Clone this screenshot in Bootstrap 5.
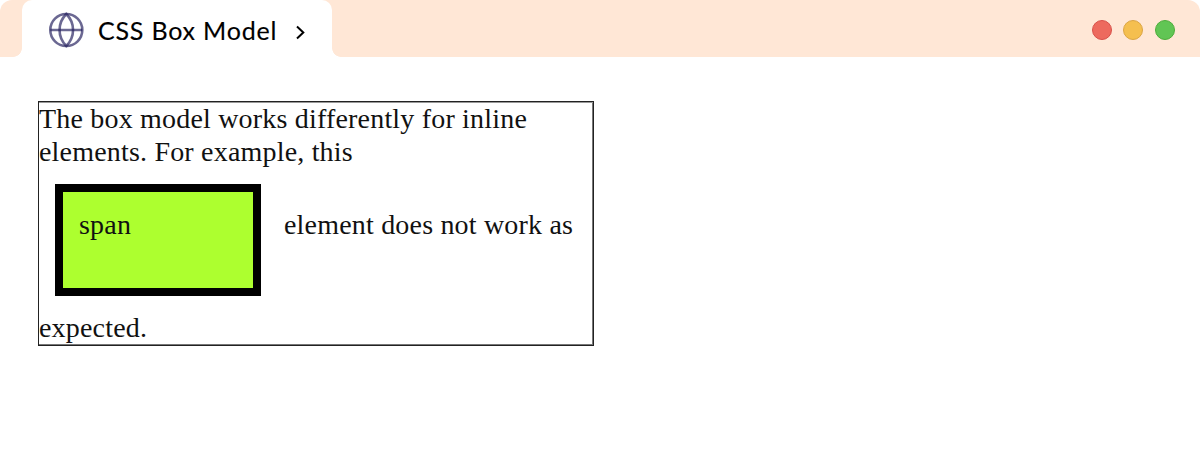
<!DOCTYPE html>
<html lang="en">
<head>
<meta charset="utf-8">
<meta name="viewport" content="width=device-width, initial-scale=1">
<title>CSS Box Model</title>
<link href="https://cdn.jsdelivr.net/npm/bootstrap@5.3.0/dist/css/bootstrap.min.css" rel="stylesheet">
<style>
body{background:#fff;overflow:hidden}
.window-bar{height:57px;background:#ffe7d6;border-radius:12px 12px 0 0;padding-left:22px;padding-right:25px}
.window-tab{width:309.5px;height:57px;background:#fff;border-radius:10px 10px 0 0;padding:3px 0 0 26px;color:#000}
.window-tab::before,.window-tab::after{content:"";position:absolute;bottom:0;width:9px;height:9px}
.window-tab::before{right:100%;background:radial-gradient(circle at 0 0,transparent 8.5px,#fff 9.2px)}
.window-tab::after{left:100%;background:radial-gradient(circle at 100% 0,transparent 8.5px,#fff 9.2px)}
.tab-title{font:400 25px/30px Lato,sans-serif;letter-spacing:.8px;margin:-1px 0 0 13px;white-space:nowrap;-webkit-text-stroke:.15px #000}
.tab-arrow{margin:4px 26px 0 auto}
.dots{gap:11.6px;padding-top:3px}
.dot{width:20px;height:20px;border:1.3px solid}
.dot-r{background:#ed6a5e;border-color:#d8514a}
.dot-y{background:#f5bf4f;border-color:#dba544}
.dot-g{background:#61c554;border-color:#4cad3b}
.demo{width:556px;height:245px;margin:44px 0 0 38px;border:1px solid #222;box-shadow:inset 0 1px #999,inset -1px 0 #777,inset 0 -1px #777;font:28px/33px "Liberation Serif",serif;letter-spacing:.19px;color:#111;white-space:nowrap}
.demo-span{width:206px;height:112px;margin:16px 23px 15px 16px;border:8px solid #000;background:#adff2f;padding:16px}
.demo-rest{padding-top:40px}
</style>
</head>
<body>
<header class="window-bar d-flex justify-content-between">
  <div class="window-tab position-relative d-flex align-items-center">
    <svg width="37" height="37" viewBox="0 0 37 37" fill="none" stroke="#25205f" stroke-opacity=".68" stroke-width="2.6"><circle cx="18.3" cy="18" r="16"/><path d="M18.3 2C9.3 11 9.3 25 18.3 34C27.3 25 27.3 11 18.3 2Z"/><path d="M2.3 18h32"/></svg>
    <span class="tab-title">CSS Box Model</span>
    <svg class="tab-arrow" width="11" height="15" viewBox="0 0 11 15" fill="none" stroke="#000" stroke-width="2"><path d="M2 1.5l6.300 6-6.300 6"/></svg>
  </div>
  <div class="dots d-flex align-items-center"><span class="dot dot-r rounded-circle"></span><span class="dot dot-y rounded-circle"></span><span class="dot dot-g rounded-circle"></span></div>
</header>
<main class="demo">
  <div>The box model works differently for inline<br>elements. For example, this</div>
  <div class="d-flex"><span class="demo-span">span</span><span class="demo-rest">element does not work as</span></div>
  <div>expected.</div>
</main>
<script src="https://cdn.jsdelivr.net/npm/bootstrap@5.3.0/dist/js/bootstrap.bundle.min.js"></script>
</body>
</html>
